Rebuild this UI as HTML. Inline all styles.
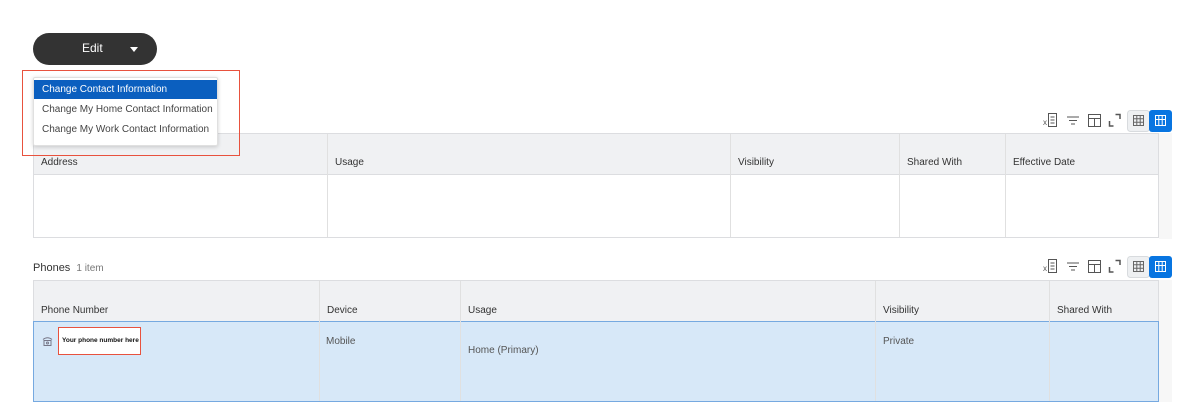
<!DOCTYPE html>
<html><head><style>
*{margin:0;padding:0;box-sizing:border-box}
body{width:1198px;height:413px;background:#fff;position:relative;overflow:hidden;font-family:"Liberation Sans",Arial,sans-serif;font-size:10px;color:#333}
.a{position:absolute}
.cell{position:absolute;top:0;bottom:0;border-left:1px solid #e0e0e0}
.hd{position:absolute;font-size:10px;color:#333}
</style></head><body>

<div class="a" style="left:33px;top:33px;width:124px;height:32px;background:#333;border-radius:16px;"></div>
<div class="a" style="left:82px;top:41px;color:#fff;font-size:12px;">Edit</div>
<div class="a" style="left:130px;top:47px;width:0;height:0;border-left:4px solid transparent;border-right:4px solid transparent;border-top:5px solid #fff;"></div>

<div class="a" style="left:1159px;top:133px;width:13px;height:106px;background:#f7f7f7"></div>
<div class="a" style="left:33px;top:133px;width:1126px;height:105px;border:1px solid #dcdde0;background:#fff">
  <div class="a" style="left:0;top:0;right:0;height:41px;background:#f0f1f3;border-bottom:1px solid #dcdde0"></div>
  <div class="cell" style="left:293px"></div>
  <div class="cell" style="left:696px"></div>
  <div class="cell" style="left:865px"></div>
  <div class="cell" style="left:971px"></div>
  <div class="hd" style="left:7px;top:23px">Address</div>
  <div class="hd" style="left:301px;top:23px">Usage</div>
  <div class="hd" style="left:704px;top:23px">Visibility</div>
  <div class="hd" style="left:873px;top:23px">Shared With</div>
  <div class="hd" style="left:979px;top:23px">Effective Date</div>
</div>

<svg class="a" style="left:1043px;top:110px" width="130" height="22" viewBox="0 0 130 22">
 <g stroke="#555" fill="none" stroke-width="1">
  <text x="0" y="15" font-size="8" fill="#555" stroke="none" font-family="Liberation Sans">x</text>
  <rect x="5.5" y="3.5" width="8" height="13"/><path d="M7.5 7h4M7.5 10h4M7.5 13h4"/>
  <path d="M24 7h12M26 10.5h8M28 14h4"/>
  <rect x="45.5" y="4.5" width="12" height="12"/><path d="M45.5 8.5h12M51.5 8.5v8"/>
  <path d="M66.5 11v5h4M72.5 4.5h4.5v4.5" stroke-width="1.5"/>
 </g>
 <rect x="84.5" y="0.5" width="22" height="21" rx="3" fill="#eef0f2" stroke="#d8dbde"/>
 <g stroke="#666" fill="none"><rect x="90.5" y="5.5" width="10" height="10"/><path d="M90.5 8.8h10M90.5 12.2h10M93.8 5.5v10M97.2 5.5v10"/></g>
 <rect x="106" y="0" width="23" height="22" rx="3" fill="#0875e1"/>
 <g stroke="#fff" fill="none"><rect x="112.5" y="5.5" width="10" height="10"/><path d="M112.5 9.5h10M115.8 5.5v10M119.2 5.5v10"/></g>
</svg>
<svg class="a" style="left:1043px;top:256px" width="130" height="22" viewBox="0 0 130 22">
 <g stroke="#555" fill="none" stroke-width="1">
  <text x="0" y="15" font-size="8" fill="#555" stroke="none" font-family="Liberation Sans">x</text>
  <rect x="5.5" y="3.5" width="8" height="13"/><path d="M7.5 7h4M7.5 10h4M7.5 13h4"/>
  <path d="M24 7h12M26 10.5h8M28 14h4"/>
  <rect x="45.5" y="4.5" width="12" height="12"/><path d="M45.5 8.5h12M51.5 8.5v8"/>
  <path d="M66.5 11v5h4M72.5 4.5h4.5v4.5" stroke-width="1.5"/>
 </g>
 <rect x="84.5" y="0.5" width="22" height="21" rx="3" fill="#eef0f2" stroke="#d8dbde"/>
 <g stroke="#666" fill="none"><rect x="90.5" y="5.5" width="10" height="10"/><path d="M90.5 8.8h10M90.5 12.2h10M93.8 5.5v10M97.2 5.5v10"/></g>
 <rect x="106" y="0" width="23" height="22" rx="3" fill="#0875e1"/>
 <g stroke="#fff" fill="none"><rect x="112.5" y="5.5" width="10" height="10"/><path d="M112.5 9.5h10M115.8 5.5v10M119.2 5.5v10"/></g>
</svg>

<div class="a" style="left:33px;top:262px;font-size:11px;color:#333">Phones <span style="color:#777;font-size:10px;margin-left:3px">1 item</span></div>
<div class="a" style="left:1159px;top:280px;width:13px;height:122px;background:#f7f7f7"></div>
<div class="a" style="left:33px;top:280px;width:1126px;height:122px;border:1px solid #dcdde0;background:#f0f1f3">
  <div class="a" style="left:-1px;top:40px;right:-1px;bottom:-1px;background:#d7e8f8;border:1.5px solid #76a9e0"></div>
  <div class="cell" style="left:285px"></div>
  <div class="cell" style="left:426px"></div>
  <div class="cell" style="left:841px"></div>
  <div class="cell" style="left:1015px"></div>
  <div class="hd" style="left:7px;top:24px">Phone Number</div>
  <div class="hd" style="left:293px;top:24px">Device</div>
  <div class="hd" style="left:434px;top:24px">Usage</div>
  <div class="hd" style="left:849px;top:24px">Visibility</div>
  <div class="hd" style="left:1023px;top:24px">Shared With</div>
  <div class="hd" style="left:292px;top:55px;color:#555">Mobile</div>
  <div class="hd" style="left:434px;top:64px;color:#555">Home (Primary)</div>
  <div class="hd" style="left:849px;top:55px;color:#555">Private</div>
</div>
<svg class="a" style="left:42px;top:336px" width="11" height="10" viewBox="0 0 11 10"><g fill="none" stroke="#778" stroke-width="1"><path d="M1 3.5 Q5.5 0 10 3.5"/><rect x="2" y="4.5" width="7" height="5"/><circle cx="5.5" cy="7" r="1"/></g></svg>
<div class="a" style="left:58px;top:327px;width:83px;height:28px;background:#fff;border:1px solid #e8523e"></div>
<div class="a" style="left:62px;top:337px;font-size:6.5px;font-weight:bold;color:#111">Your phone number here</div>

<div class="a" style="left:33px;top:77px;width:185px;height:69px;background:#fff;border:1px solid #e0e0e0;border-radius:2px;box-shadow:0 1px 4px rgba(0,0,0,.18)"></div>
<div class="a" style="left:34px;top:80px;width:183px;height:19px;background:#0b5fbf"></div>
<div class="a" style="left:42px;top:84px;color:#fff;font-size:10px">Change Contact Information</div>
<div class="a" style="left:42px;top:104px;color:#444;font-size:10px">Change My Home Contact Information</div>
<div class="a" style="left:42px;top:124px;color:#444;font-size:10px">Change My Work Contact Information</div>
<div class="a" style="left:22px;top:70px;width:218px;height:86px;border:1px solid #e8523e"></div>
</body></html>
